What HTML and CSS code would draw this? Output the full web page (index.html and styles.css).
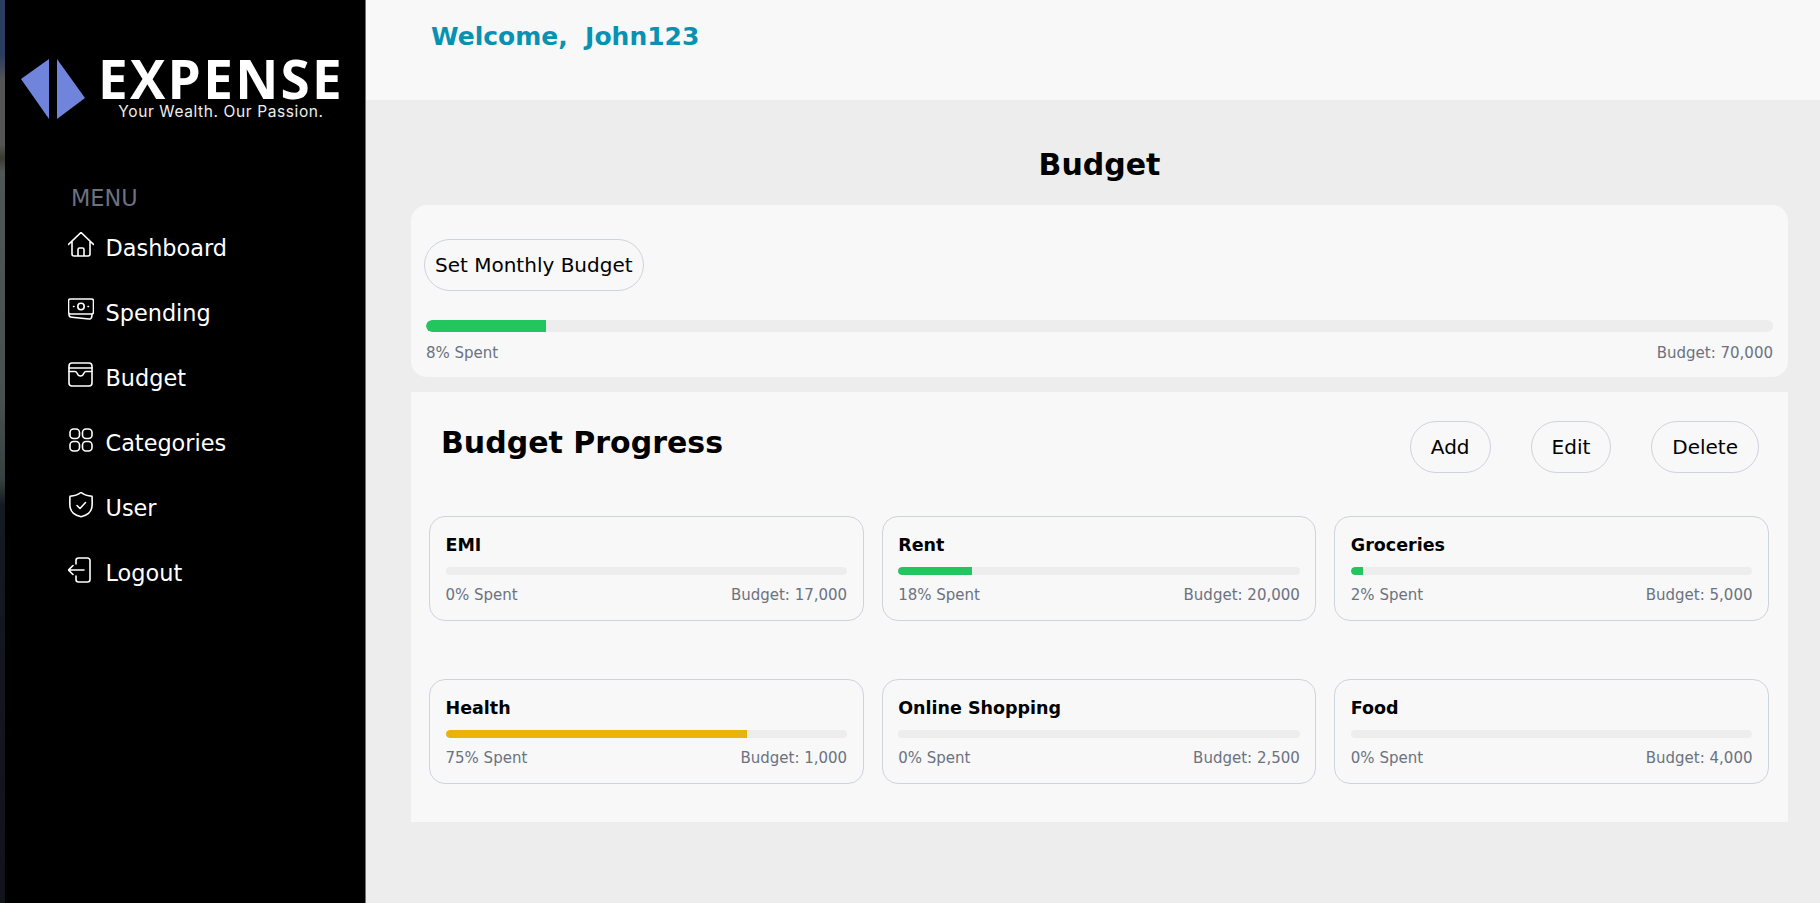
FILE: index.html
```html
<!DOCTYPE html>
<html lang="en">

<head>
  <meta charset="UTF-8">
  <meta name="viewport" content="width=device-width, initial-scale=1.0">
  <title>Expense - Budget</title>
  <link rel="stylesheet" href="styles.css">
</head>

<body>

  <div class="photo-strip"></div>

  <aside class="sidebar">
    <div class="logo">
      <svg class="logo-mark" width="64" height="60" viewBox="0 0 64 60">
        <polygon points="28,0 28,60 0,20" fill="#7084db"/>
        <polygon points="36,0 36,60 64,39" fill="#7084db"/>
      </svg>
      <div class="logo-text">
        <span class="logo-name">EXPENSE</span>
        <span class="logo-tag">Your Wealth. Our Passion.</span>
      </div>
    </div>

    <p class="menu-label">MENU</p>
    <ul class="menu">
      <li>
        <svg class="icon" viewBox="0 0 26 26"><path d="M.5 12.500 13 .5l12.500 12M4 9.500V22a2 2 0 0 0 2 2h14a2 2 0 0 0 2-2V9.500M10 24v-6.500a1.500 1.500 0 0 1 1.500-1.500h3a1.500 1.500 0 0 1 1.500 1.500V24"/></svg>
        Dashboard
      </li>
      <li>
        <svg class="icon" viewBox="0 0 26 26"><rect x=".5" y="2" width="25" height="15" rx="2"/><circle cx="13" cy="9.500" r="3.200"/><path d="M5.500 9.500h.5M20 9.500h.5M1 17.500c0 2 1 2.700 3 2.700l17 1.800c2 .2 3-.8 3-5"/></svg>
        Spending
      </li>
      <li>
        <svg class="icon" viewBox="0 0 26 26"><rect x="1" y="1" width="23" height="23" rx="3"/><path d="M1 6h23M1 9.500h6c1 0 1.500.5 2 1.500.8 2 1.700 3 3.500 3s2.700-1 3.500-3c.5-1 1-1.500 2-1.500h6"/></svg>
        Budget
      </li>
      <li>
        <svg class="icon" viewBox="0 0 26 26"><rect x="2" y="2" width="9.500" height="9.500" rx="3.500"/><rect x="14.500" y="2" width="9.500" height="9.500" rx="3.500"/><rect x="2" y="14.500" width="9.500" height="9.500" rx="3.500"/><rect x="14.500" y="14.500" width="9.500" height="9.500" rx="3.500"/></svg>
        Categories
      </li>
      <li>
        <svg class="icon" viewBox="0 0 26 26"><path d="M13 .5c2.500 2 6.500 3.500 11 3.800.5 8.700.5 13.700-3.500 17-2 1.700-5 2.800-7.500 3.500-2.500-.7-5.500-1.800-7.500-3.500C1.500 18 1.500 13 2 4.300 6.500 4 10.500 2.500 13 .5z"/><path d="m9 13.500 3 3 5.500-6"/></svg>
        User
      </li>
      <li>
        <svg class="icon" viewBox="0 0 26 26"><path d="M8 7V3.500A2.500 2.500 0 0 1 10.500 1h9A2.500 2.500 0 0 1 22 3.500v19a2.500 2.500 0 0 1-2.500 2.500h-9A2.500 2.500 0 0 1 8 22.500V19M16 13H.5M5 8.500.5 13 5 17.500"/></svg>
        Logout
      </li>
    </ul>
  </aside>

  <div class="page">
    <header class="topbar">
      <h1>Welcome,&nbsp; John123</h1>
    </header>

    <main class="content">
      <h2 class="page-title">Budget</h2>

      <section class="panel monthly">
        <button class="pill">Set Monthly Budget</button>
        <div class="track track-large"><div class="fill green" style="width: 8.900%"></div></div>
        <div class="stats">
          <span>8% Spent</span>
          <span>Budget: 70,000</span>
        </div>
      </section>

      <section class="panel progress">
        <div class="progress-head">
          <h2>Budget Progress</h2>
          <div class="actions">
            <button class="pill">Add</button>
            <button class="pill">Edit</button>
            <button class="pill">Delete</button>
          </div>
        </div>

        <div class="cards">
          <div class="card">
            <h3>EMI</h3>
            <div class="track"></div>
            <div class="stats"><span>0% Spent</span><span>Budget: 17,000</span></div>
          </div>
          <div class="card">
            <h3>Rent</h3>
            <div class="track"><div class="fill green" style="width: 18.500%"></div></div>
            <div class="stats"><span>18% Spent</span><span>Budget: 20,000</span></div>
          </div>
          <div class="card">
            <h3>Groceries</h3>
            <div class="track"><div class="fill green" style="width: 3%"></div></div>
            <div class="stats"><span>2% Spent</span><span>Budget: 5,000</span></div>
          </div>
          <div class="card">
            <h3>Health</h3>
            <div class="track"><div class="fill yellow" style="width: 75%"></div></div>
            <div class="stats"><span>75% Spent</span><span>Budget: 1,000</span></div>
          </div>
          <div class="card">
            <h3>Online Shopping</h3>
            <div class="track"></div>
            <div class="stats"><span>0% Spent</span><span>Budget: 2,500</span></div>
          </div>
          <div class="card">
            <h3>Food</h3>
            <div class="track"></div>
            <div class="stats"><span>0% Spent</span><span>Budget: 4,000</span></div>
          </div>
        </div>
      </section>
    </main>
  </div>

</body>
</html>
```

FILE: styles.css
```css
* {
  box-sizing: border-box;
}

html,
body {
  height: 100%;
}

body {
  margin: 0;
  display: flex;
  height: 903px;
  overflow: hidden;
  font-family: 'DejaVu Sans', sans-serif;
  background-color: #ededed;
  color: #000;
}

.photo-strip {
  flex: 0 0 5px;
  background: linear-gradient(180deg, #2a3c60 0, #2a3c60 6%, #555 9%, #555 16%, #3a3a30 17.500%, #505555 19%, #4a5050 44%, #36423f 53%, #151a20 56%, #10141a 100%);
}

.sidebar {
  flex: 0 0 361px;
  background-color: #000;
  color: #fff;
  border-right: 1px solid #6b7280;
}

.logo {
  display: flex;
  align-items: flex-start;
  padding: 59px 0 0 16px;
}

.logo-text {
  display: flex;
  flex-direction: column;
  align-items: center;
  margin-left: 14px;
  width: 244px;
}

.logo-name {
  font-family: 'Open Sans', sans-serif;
  font-weight: 700;
  font-size: 53px;
  line-height: 40px;
  letter-spacing: 2.300px;
}

.logo-tag {
  margin-top: 3px;
  font-family: 'Inter', sans-serif;
  font-size: 15.500px;
  letter-spacing: .6px;
  line-height: 20px;
  color: #eeeeee;
}

.menu-label {
  margin: 63px 0 0 66px;
  font-size: 22.400px;
  line-height: 26px;
  color: #6b7280;
}

.menu {
  list-style-type: none;
  margin: 4px 0 0;
  padding: 0 0 0 63px;
}

.menu li {
  display: flex;
  align-items: center;
  gap: 11.500px;
  height: 65px;
  font-size: 22.400px;
}

.icon {
  width: 26px;
  height: 26px;
  margin-top: -5px;
  fill: none;
  stroke: #fff;
  stroke-width: 1.600;
  stroke-linecap: round;
  stroke-linejoin: round;
}

.page {
  flex: 1;
  min-width: 0;
}

.topbar {
  height: 100px;
  padding: 22px 0 0 65px;
  background-color: #f8f8f8;
}

.topbar h1 {
  margin: 0;
  font-size: 25px;
  line-height: 30px;
  color: #0891b2;
}

.content {
  padding: 0 32px 0 45px;
}

.page-title {
  margin: 0;
  padding-top: 47px;
  text-align: center;
  font-size: 30px;
  line-height: 36px;
}

.panel {
  background-color: #f8f8f8;
}

.monthly {
  margin-top: 22px;
  height: 172px;
  padding: 34px 15px 0 15px;
  border-radius: 16px;
}

.pill {
  height: 52px;
  padding: 0 10px;
  border: 1px solid #cfd3dc;
  border-radius: 26px;
  background: transparent;
  color: #000;
  font-family: 'DejaVu Sans', sans-serif;
  font-size: 20px;
}

.monthly .pill {
  display: block;
  margin-left: -2px;
}

.track {
  height: 8px;
  border-radius: 6px;
  background-color: #ededed;
  overflow: hidden;
}

.track-large {
  height: 12px;
  margin-top: 29px;
}

.fill {
  height: 100%;
  border-radius: 6px 0 0 6px;
}

.green {
  background-color: #22c55e;
}

.yellow {
  background-color: #eab308;
}

.stats {
  display: flex;
  justify-content: space-between;
  margin-top: 10px;
  font-size: 15px;
  line-height: 20px;
  color: #6b7280;
}

.monthly .stats {
  margin-top: 11px;
}

.progress {
  margin-top: 15px;
  height: 430px;
  padding: 29px 19px 0 18px;
}

.progress-head {
  display: flex;
  justify-content: space-between;
  padding: 0 10px 0 12px;
}

.progress-head h2 {
  margin: -1px 0 0;
  font-size: 30px;
  line-height: 46px;
}

.actions {
  display: flex;
  gap: 40px;
}

.actions .pill {
  padding: 0 20px;
}

.cards {
  display: grid;
  grid-template-columns: repeat(3, 1fr);
  column-gap: 18px;
  row-gap: 58px;
  margin-top: 43px;
}

.card {
  height: 105px;
  padding: 16px 15.500px;
  border: 1px solid #cfd3dc;
  border-radius: 16px;
}

.card h3 {
  margin: 2px 0 11px;
  font-size: 17.500px;
  line-height: 21px;
}

.card .stats {
  margin-top: 10px;
}
```
